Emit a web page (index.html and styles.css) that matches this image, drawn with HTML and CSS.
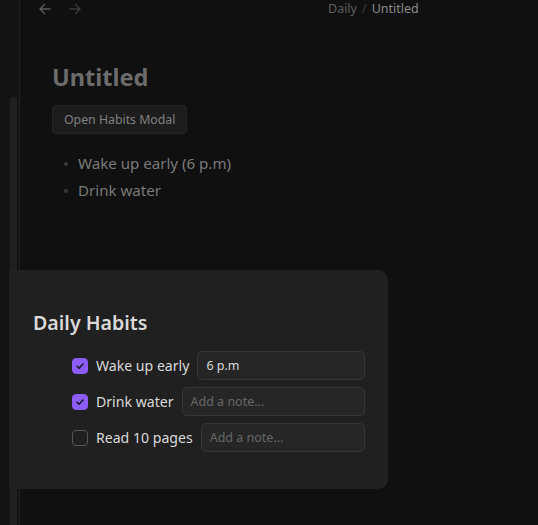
FILE: index.html
```html
<!DOCTYPE html>
<html>
<head>
<meta charset="utf-8">
<link rel="stylesheet" href="styles.css">
</head>
<body>
<div class="app">
  <div class="side">
    <div class="thumb"></div>
  </div>
  <div class="main">
    <div class="topbar">
      <div class="nav">
        <svg class="arrow" width="14" height="14" viewBox="0 0 14 14"><path d="M12 7H2M6.5 2.5L2 7l4.5 4.5" fill="none" stroke="#5a5a5a" stroke-width="1.4" stroke-linecap="round" stroke-linejoin="round"/></svg>
        <svg class="arrow" width="14" height="14" viewBox="0 0 14 14"><path d="M2 7h10M7.5 2.5L12 7l-4.5 4.5" fill="none" stroke="#3a3a3a" stroke-width="1.4" stroke-linecap="round" stroke-linejoin="round"/></svg>
      </div>
      <div class="crumbs"><span class="crumb-dim">Daily</span><span class="sep">/</span><span class="crumb">Untitled</span></div>
    </div>
    <div class="doc">
      <h1 class="title">Untitled</h1>
      <button class="open-btn">Open Habits Modal</button>
      <ul class="list">
        <li>Wake up early (6 p.m)</li>
        <li>Drink water</li>
      </ul>
    </div>
  </div>
</div>
<div class="modal">
  <h2 class="modal-title">Daily Habits</h2>
  <div class="rows">
    <div class="row">
      <span class="cb on"><svg width="10" height="10" viewBox="0 0 10 10"><path d="M2 5.2l2 2L8 3" fill="none" stroke="#1c1c1c" stroke-width="1.6" stroke-linecap="round" stroke-linejoin="round"/></svg></span>
      <span class="label">Wake up early</span>
      <div class="note filled">6 p.m</div>
    </div>
    <div class="row">
      <span class="cb on"><svg width="10" height="10" viewBox="0 0 10 10"><path d="M2 5.2l2 2L8 3" fill="none" stroke="#1c1c1c" stroke-width="1.6" stroke-linecap="round" stroke-linejoin="round"/></svg></span>
      <span class="label">Drink water</span>
      <div class="note">Add a note...</div>
    </div>
    <div class="row">
      <span class="cb"></span>
      <span class="label">Read 10 pages</span>
      <div class="note">Add a note...</div>
    </div>
  </div>
</div>
</body>
</html>
```
FILE: styles.css
```css
* { box-sizing: border-box; }
html, body { margin: 0; height: 100%; }
body {
  background: #101010;
  font-family: "Noto Sans", "Open Sans", sans-serif;
  overflow: hidden;
  position: relative;
}
.app { display: flex; height: 525px; }
.side {
  width: 20px;
  background: #141414;
  border-right: 1px solid #1f1f1f;
  position: relative;
}
.thumb {
  position: absolute;
  left: 10px;
  top: 97px;
  width: 7px;
  bottom: -10px;
  background: #1f1f1f;
  border-radius: 4px;
}
.main { flex: 1; display: flex; flex-direction: column; }
.topbar {
  height: 18px;
  display: flex;
  align-items: center;
  position: relative;
}
.nav { display: flex; gap: 16px; padding-left: 18px; }
.arrow { display: block; }
.crumbs {
  position: absolute;
  left: 308px;
  top: 0;
  font-size: 12.5px;
  line-height: 17px;
}
.crumb-dim { color: #5e5e5e; }
.sep { color: #3c3c3c; margin: 0 5px; }
.crumb { color: #8a8a8a; }
.doc { padding: 44px 0 0 32px; }
.title {
  margin: 0;
  font-size: 23.5px;
  line-height: 30px;
  font-weight: 700;
  color: #6c6c6c;
}
.open-btn {
  margin-top: 13px;
  height: 29px;
  padding: 0 11px;
  background: #1c1c1c;
  border: 1px solid #242424;
  border-radius: 4px;
  color: #808080;
  font-family: inherit;
  font-size: 12.3px;
}
.list {
  list-style: none;
  margin: 16px 0 0;
  padding: 0 0 0 26px;
  color: #7a7a7a;
  font-size: 15.1px;
  line-height: 27px;
}
.list li { position: relative; }
.list li::before {
  content: "";
  position: absolute;
  left: -14px;
  top: 12px;
  width: 4px;
  height: 4px;
  border-radius: 50%;
  background: #3a3a3a;
}
.modal {
  position: absolute;
  left: 9px;
  top: 270px;
  width: 379px;
  height: 219px;
  background: #202020;
  border-radius: 0 10px 10px 0;
  padding: 40px 23px 0 24px;
}
.modal-title {
  margin: 0;
  font-size: 19.6px;
  line-height: 26px;
  font-weight: 600;
  color: #dadada;
}
.rows {
  margin-top: 15px;
  margin-left: 39px;
  display: flex;
  flex-direction: column;
  gap: 7px;
}
.row { display: flex; align-items: center; height: 29px; }
.cb {
  width: 16px;
  height: 16px;
  border-radius: 4px;
  border: 1px solid #555;
  display: flex;
  align-items: center;
  justify-content: center;
  flex: none;
}
.cb.on { background: #8b5cf6; border-color: #8b5cf6; }
.label {
  margin-left: 8px;
  color: #dadada;
  font-size: 14.1px;
  white-space: nowrap;
}
.note {
  flex: 1;
  margin-left: 8px;
  height: 29px;
  border: 1px solid #363636;
  background: #262626;
  border-radius: 5px;
  padding: 0 8px;
  font-size: 12.5px;
  line-height: 27px;
  color: #666;
}
.note.filled { color: #dadada; }
```
